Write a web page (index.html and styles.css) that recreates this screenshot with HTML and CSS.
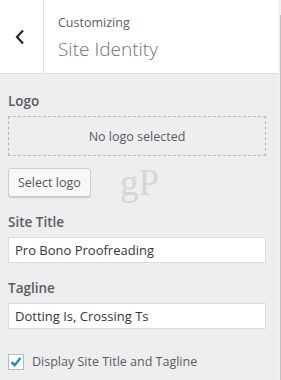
FILE: index.html
```html
<!DOCTYPE html>
<html lang="en">
<head>
    <meta charset="UTF-8">
    <meta name="viewport" content="width=device-width, initial-scale=1.0">
    <title>Customizing - Site Identity</title>
    <link rel="stylesheet" href="styles.css">
</head>
<body>
    <div class="frame">
        <div class="sidebar">
            <header class="panel-head">
                <button class="back" aria-label="Back">
                    <svg width="10" height="16" viewBox="0 0 10 16">
                        <path d="M8 1.5 L2 8 L8 14.5" fill="none" stroke="#23282d" stroke-width="2.2"/>
                    </svg>
                </button>
                <div class="panel-title">
                    <span class="crumb">Customizing</span>
                    <h2>Site Identity</h2>
                </div>
            </header>

            <div class="controls">
                <div class="control">
                    <span class="label">Logo</span>
                    <div class="placeholder">No logo selected</div>
                    <div class="actions">
                        <button class="btn">Select logo</button>
                        <span class="watermark">gP</span>
                    </div>
                </div>

                <div class="control">
                    <label class="label" for="blogname">Site Title</label>
                    <input class="field" id="blogname" type="text" value="Pro Bono Proofreading">
                </div>

                <div class="control">
                    <label class="label" for="blogdesc">Tagline</label>
                    <input class="field" id="blogdesc" type="text" value="Dotting Is, Crossing Ts">
                </div>

                <label class="check">
                    <span class="box">
                        <svg width="14" height="14" viewBox="0 0 14 14">
                            <path d="M2.5 7.2 L5.6 10.2 L11.5 3" fill="none" stroke="#1e8cbe" stroke-width="2.4"/>
                        </svg>
                    </span>
                    Display Site Title and Tagline
                </label>
            </div>
        </div>
        <div class="scroll"><div class="thumb"></div></div>
    </div>
</body>
</html>
```

FILE: styles.css
```css
* {
    margin: 0;
    padding: 0;
    box-sizing: border-box;
}

body {
    background: #eee;
    font-family: 'Open Sans', 'Noto Sans', sans-serif;
    color: #555d66;
    width: 281px;
    height: 380px;
    overflow: hidden;
}

.frame {
    display: flex;
    height: 380px;
}

.sidebar {
    width: 278px;
    background: #eee;
}

/* Scroll strip at the right edge */
.scroll {
    width: 3px;
    background: #f1f1f1;
    padding-top: 15px;
    display: flex;
    justify-content: flex-end;
}

.thumb {
    width: 1px;
    background: #c1c1c1;
}

/* Header */
.panel-head {
    display: flex;
    height: 74px;
    background: #fff;
    border-bottom: 1px solid #ddd;
}

.back {
    width: 44px;
    background: #fff;
    border: none;
    border-right: 1px solid #ddd;
    display: flex;
    align-items: center;
    justify-content: center;
    padding-right: 4px;
}

.panel-title {
    padding: 14px 0 0 14px;
}

.crumb {
    display: block;
    font-size: 12.5px;
    line-height: 17px;
    color: #555d66;
}

.panel-title h2 {
    font-size: 19px;
    font-weight: 300;
    line-height: 28px;
    margin-top: 4px;
    color: #6b737b;
}

/* Controls */
.controls {
    padding: 17px 12px 0 8px;
}

.control {
    margin-bottom: 15px;
}

.label {
    display: block;
    font-size: 13.5px;
    font-weight: 600;
    line-height: 20px;
    color: #555d66;
    margin-bottom: 5px;
}

.placeholder {
    height: 40px;
    border: 1px dashed #b4b9be;
    display: flex;
    align-items: center;
    justify-content: center;
    font-size: 12.5px;
    color: #555d66;
}

.actions {
    position: relative;
    margin-top: 12px;
}

.btn {
    height: 29px;
    padding: 0 9px;
    background: #f7f7f7;
    border: 1px solid #ccc;
    border-radius: 3px;
    box-shadow: 0 1px 0 #ccc;
    font-family: inherit;
    font-size: 12.5px;
    color: #555;
}

.watermark {
    position: absolute;
    left: 112px;
    top: -7px;
    font-family: 'Liberation Serif', serif;
    font-size: 37px;
    color: #d6d6d6;
}

.field {
    display: block;
    width: 100%;
    height: 26px;
    padding: 0 6px;
    border: 1px solid #ddd;
    background: #fff;
    font-family: inherit;
    font-size: 13px;
    color: #32373c;
}

.check {
    display: flex;
    align-items: center;
    gap: 8px;
    font-size: 12.5px;
    color: #555d66;
    margin-top: 24px;
}

.box {
    width: 16px;
    height: 16px;
    background: #fff;
    border: 1px solid #b4b9be;
    display: flex;
    align-items: center;
    justify-content: center;
}
```
